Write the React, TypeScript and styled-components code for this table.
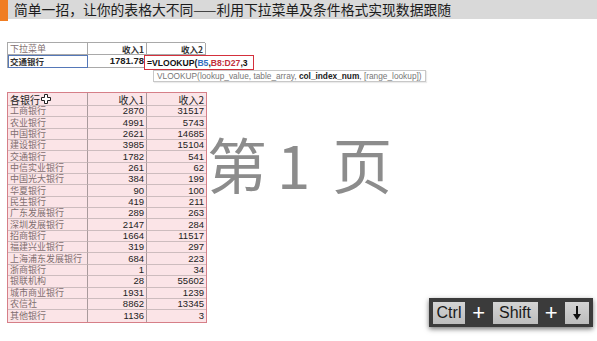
import React from "react";
import styled, { createGlobalStyle } from "styled-components";

const Global = createGlobalStyle`
  html, body { margin: 0; padding: 0; background: #fff; }
  body { width: 597px; height: 341px; overflow: hidden; font-family: "Noto Sans CJK SC", "Noto Sans", sans-serif; }
`;

const Page = styled.div`
  position: relative;
  width: 597px;
  height: 341px;
  background: #fff;
  display: flex;
  flex-direction: column;
`;

const TitleBar = styled.div`
  display: flex;
  align-items: flex-start;
  height: 21px;
`;

const Accent = styled.div`
  width: 8px;
  height: 21px;
  background: #f07d22;
`;

const TitleText = styled.div`
  flex: 1;
  height: 19px;
  background: #d9d9d9;
  padding-left: 6px;
  font-size: 13.8px;
  line-height: 19px;
  color: #1c1c1c;
  white-space: nowrap;
`;

const Content = styled.div`
  padding: 21px 0 0 7px;
  display: flex;
  flex-direction: column;
`;

const TopWrap = styled.div`
  position: relative;
  width: 198px;
`;

const Grid = styled.div<{ $rows: string }>`
  display: grid;
  grid-template-columns: 80px 59px 59px;
  grid-template-rows: ${(p) => p.$rows};
`;

const TopCell = styled.div<{ $align?: string; $sel?: boolean }>`
  box-sizing: border-box;
  border-right: 1px solid #a9a9a9;
  border-bottom: 1px solid #a9a9a9;
  display: flex;
  align-items: center;
  justify-content: ${(p) => p.$align || "flex-start"};
  padding: 0 2px;
  font-size: 9px;
  color: #444;
  white-space: nowrap;
  ${(p) => p.$sel && "outline: 1.5px solid #5578b8; outline-offset: -1px;"}
`;

const TopFrame = styled(Grid)`
  border-top: 1px solid #a9a9a9;
  border-left: 1px solid #a9a9a9;
`;

const Num = styled.span<{ $bold?: boolean }>`
  font-family: "Liberation Sans", Arial, sans-serif;
  font-size: 9.5px;
  line-height: 10px;
  font-weight: ${(p) => (p.$bold ? 700 : 400)};
  color: #222;
`;

const HeadLabel = styled.span`
  font-weight: 700;
  font-size: 8.5px;
  line-height: 10px;
  color: #333;
`;

const FormulaBox = styled.div`
  position: absolute;
  left: 137px;
  top: 13px;
  width: 110px;
  height: 15px;
  box-sizing: border-box;
  border: 1.5px solid #d4303c;
  background: #fff;
  display: flex;
  align-items: center;
  padding-left: 2px;
  font-family: "Liberation Sans", Arial, sans-serif;
  font-weight: 700;
  font-size: 8.6px;
  color: #111;
  white-space: nowrap;
`;

const Ref = styled.span<{ $c: string }>`
  color: ${(p) => p.$c};
`;

const Tip = styled.div`
  position: absolute;
  left: 146px;
  top: 28px;
  height: 12px;
  box-sizing: border-box;
  border: 1px solid #c8c8c8;
  background: #fff;
  padding: 0 3px;
  display: flex;
  align-items: center;
  font-family: "Liberation Sans", Arial, sans-serif;
  font-size: 8.3px;
  color: #777;
  white-space: nowrap;
  box-shadow: 1px 1px 1px rgba(0, 0, 0, 0.08);
`;

const MainRow = styled.div`
  display: flex;
  align-items: flex-start;
  margin-top: 24px;
`;

const MainFrame = styled(Grid)`
  border: 1px solid #d67f88;
  background: #fbe4e7;
`;

const MCell = styled.div<{ $align?: string; $last?: boolean; $lastRow?: boolean }>`
  box-sizing: border-box;
  border-right: ${(p) => (p.$last ? "none" : "1px solid #a99a9c")};
  border-bottom: ${(p) => (p.$lastRow ? "none" : "1px solid #cdbcbe")};
  display: flex;
  align-items: center;
  justify-content: ${(p) => p.$align || "flex-start"};
  padding: 0 2px;
  white-space: nowrap;
`;

const Bank = styled.span`
  font-size: 9px;
  color: #7f6f70;
  line-height: 10px;
`;

const HeadText = styled.span`
  font-size: 10px;
  color: #222;
  line-height: 11px;
  display: flex;
  align-items: center;
`;

const Watermark = styled.div`
  margin: 41px 0 0 0;
  font-size: 60px;
  line-height: 1;
  color: #8c8c8c;
  font-weight: 400;
  display: flex;
  align-items: baseline;
`;

const WmChar = styled.span<{ $ml?: number }>`
  margin-left: ${(p) => p.$ml ?? 0}px;
`;

const KeyPanel = styled.div`
  position: absolute;
  left: 429px;
  top: 298px;
  width: 164px;
  height: 29px;
  background: #3b3b3b;
  box-shadow: 0 2px 5px rgba(0, 0, 0, 0.55);
  display: flex;
  align-items: center;
  padding: 0 4px;
  box-sizing: border-box;
`;

const Key = styled.div<{ $w: number }>`
  width: ${(p) => p.$w}px;
  height: 22px;
  background: linear-gradient(#d4d4d4, #bdbdbd);
  display: flex;
  align-items: center;
  justify-content: center;
  font-family: "Liberation Sans", Arial, sans-serif;
  font-size: 16px;
  color: #1a1a1a;
`;

const Plus = styled.div`
  flex: 1;
  text-align: center;
  font-family: "Liberation Sans", Arial, sans-serif;
  font-size: 22px;
  line-height: 1;
  color: #fff;
`;

const rows: [string, string, string][] = [
  ["工商银行", "2870", "31517"],
  ["农业银行", "4991", "5743"],
  ["中国银行", "2621", "14685"],
  ["建设银行", "3985", "15104"],
  ["交通银行", "1782", "541"],
  ["中信实业银行", "261", "62"],
  ["中国光大银行", "384", "199"],
  ["华夏银行", "90", "100"],
  ["民生银行", "419", "211"],
  ["广东发展银行", "289", "263"],
  ["深圳发展银行", "2147", "284"],
  ["招商银行", "1664", "11517"],
  ["福建兴业银行", "319", "297"],
  ["上海浦东发展银行", "684", "223"],
  ["浙商银行", "1", "34"],
  ["银联机构", "28", "55602"],
  ["城市商业银行", "1931", "1239"],
  ["农信社", "8862", "13345"],
  ["其他银行", "1136", "3"],
];

const CrossCursor = () => (
  <svg width="10" height="10" viewBox="0 0 10 10" style={{ marginLeft: 1 }}>
    <path
      d="M3.5 0.5h3v3h3v3h-3v3h-3v-3h-3v-3h3z"
      fill="#fff"
      stroke="#222"
      strokeWidth="1"
    />
  </svg>
);

const DownArrow = () => (
  <svg width="10" height="16" viewBox="0 0 10 16">
    <path d="M5 1v11" stroke="#111" strokeWidth="2" />
    <path d="M1 9l4 6 4-6z" fill="#111" />
  </svg>
);

export default function App() {
  return (
    <Page>
      <Global />
      <TitleBar>
        <Accent />
        <TitleText>简单一招，让你的表格大不同——利用下拉菜单及条件格式实现数据跟随</TitleText>
      </TitleBar>
      <Content>
        <TopWrap>
          <TopFrame $rows="12px 13px">
            <TopCell>
              <Bank>下拉菜单</Bank>
            </TopCell>
            <TopCell $align="flex-end">
              <HeadLabel>收入1</HeadLabel>
            </TopCell>
            <TopCell $align="flex-end">
              <HeadLabel>收入2</HeadLabel>
            </TopCell>
            <TopCell $sel>
              <HeadLabel>交通银行</HeadLabel>
            </TopCell>
            <TopCell $align="flex-end">
              <Num $bold>1781.78</Num>
            </TopCell>
            <TopCell />
          </TopFrame>
          <FormulaBox>
            =VLOOKUP(<Ref $c="#2f6fc0">B5</Ref>,<Ref $c="#c0303c">B8:D27</Ref>,3
          </FormulaBox>
          <Tip>
            VLOOKUP(lookup_value, table_array,&nbsp;<b style={{ color: "#222" }}>col_index_num</b>, [range_lookup])
          </Tip>
        </TopWrap>
        <MainRow>
          <MainFrame $rows={`13px repeat(${rows.length}, 11.35px)`}>
            <MCell>
              <HeadText>
                各银行
                <CrossCursor />
              </HeadText>
            </MCell>
            <MCell $align="flex-end">
              <HeadText>收入1</HeadText>
            </MCell>
            <MCell $align="flex-end" $last>
              <HeadText>收入2</HeadText>
            </MCell>
            {rows.map(([b, a, c], i) => {
              const lr = i === rows.length - 1;
              return (
                <React.Fragment key={b}>
                  <MCell $lastRow={lr}>
                    <Bank>{b}</Bank>
                  </MCell>
                  <MCell $align="flex-end" $lastRow={lr}>
                    <Num>{a}</Num>
                  </MCell>
                  <MCell $align="flex-end" $last $lastRow={lr}>
                    <Num>{c}</Num>
                  </MCell>
                </React.Fragment>
              );
            })}
          </MainFrame>
          <Watermark>
            <WmChar>第</WmChar>
            <WmChar $ml={10}>1</WmChar>
            <WmChar $ml={22}>页</WmChar>
          </Watermark>
        </MainRow>
      </Content>
      <KeyPanel>
        <Key $w={32}>Ctrl</Key>
        <Plus>+</Plus>
        <Key $w={45}>Shift</Key>
        <Plus>+</Plus>
        <Key $w={24}>
          <DownArrow />
        </Key>
      </KeyPanel>
    </Page>
  );
}
